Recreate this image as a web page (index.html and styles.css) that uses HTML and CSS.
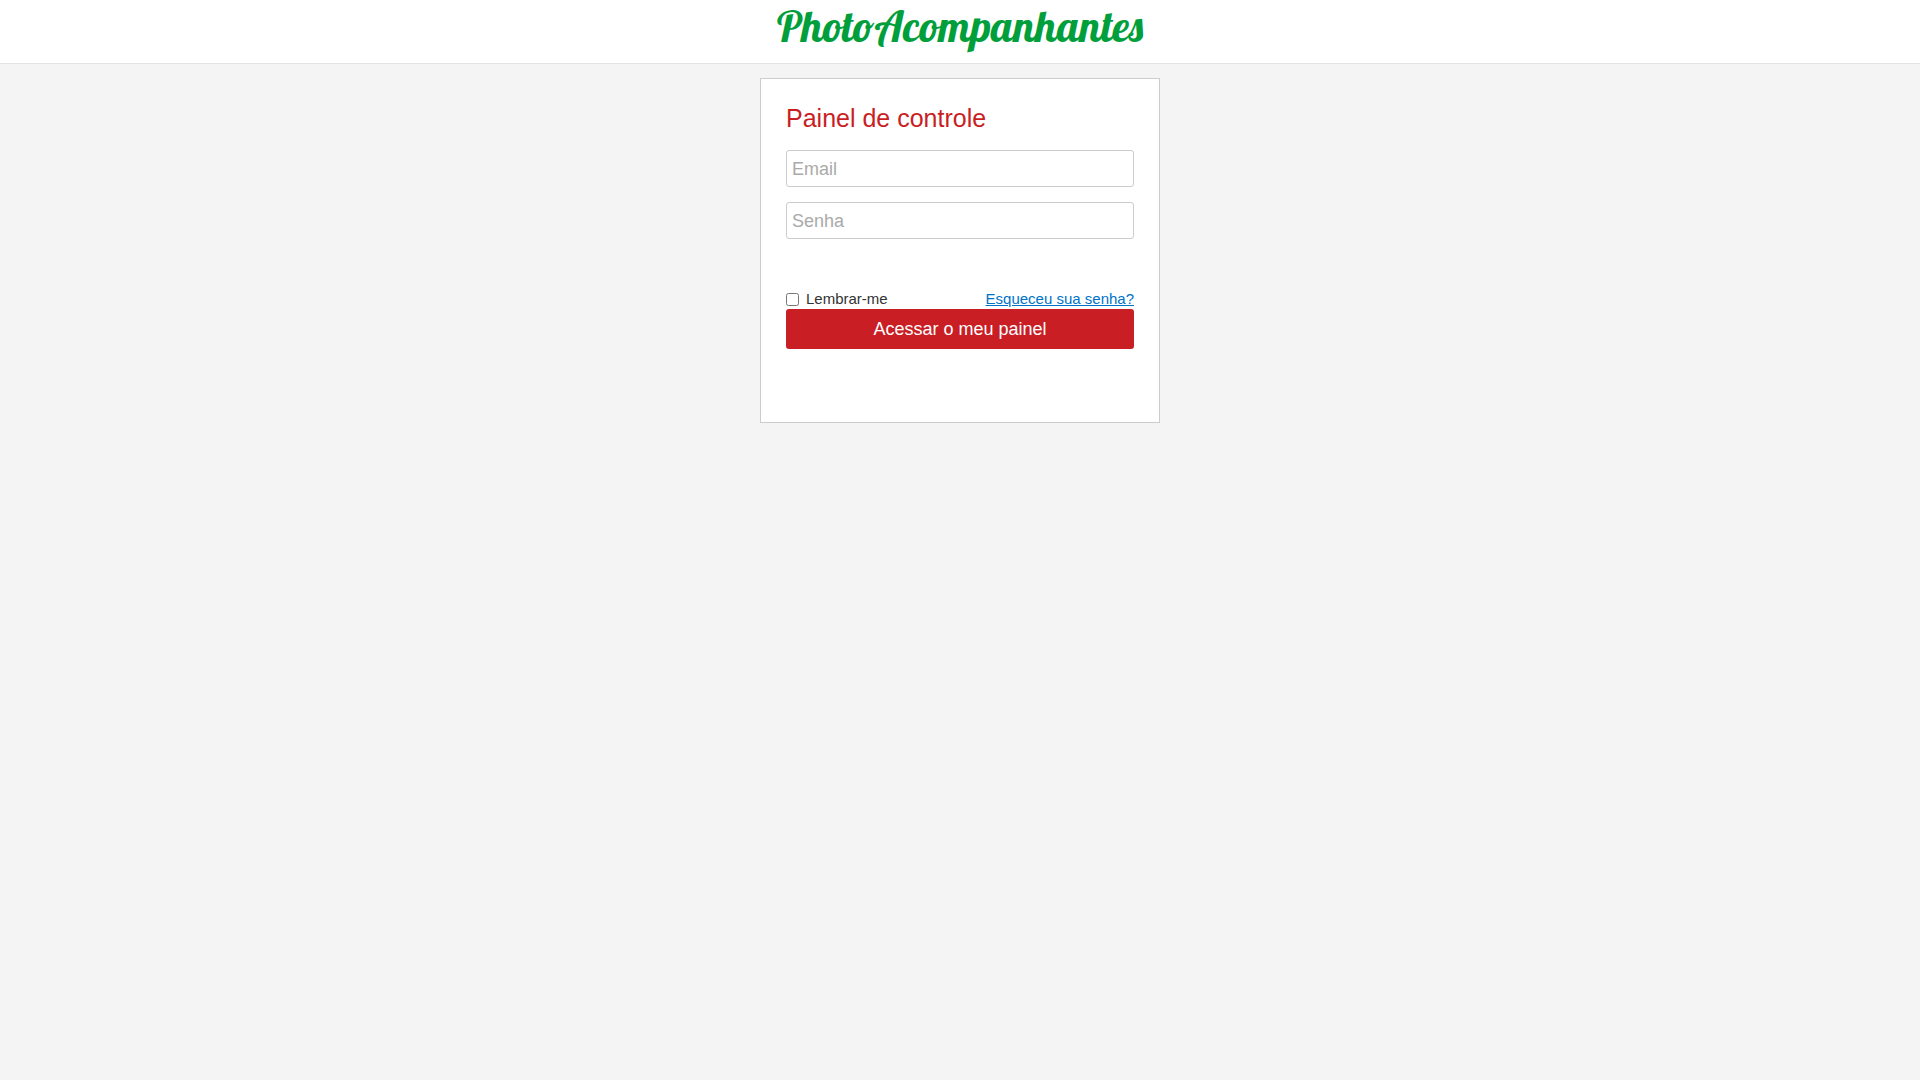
FILE: index.html
```html
<!DOCTYPE html>
<html lang="pt-BR">

<head>
  <meta charset="UTF-8">
  <meta name="viewport" content="width=device-width, initial-scale=1.0">
  <title>Painel de controle</title>
  <link rel="stylesheet" href="styles.css">
</head>

<body>
  <header class="header">
    <a class="logo" href="#">PhotoAcompanhantes</a>
  </header>
  <main class="login">
    <h1 class="title">Painel de controle</h1>
    <form class="form">
      <input class="field" type="email" name="email" placeholder="Email" aria-label="Email">
      <input class="field" type="password" name="password" placeholder="Senha" aria-label="Senha">
      <div class="options">
        <label class="remember" for="remember">
          <input class="check" type="checkbox" id="remember" name="remember">
          Lembrar-me
        </label>
        <a class="forgot" href="#">Esqueceu sua senha?</a>
      </div>
      <button class="button" type="submit">Acessar o meu painel</button>
    </form>
  </main>
</body>

</html>
```
FILE: styles.css
```css
* {
  margin: 0;
  padding: 0;
  box-sizing: border-box;
}

body {
  background: #f4f4f4;
  color: #333;
  font-family: Arial, "Liberation Sans", sans-serif;
  font-size: 15px;
  line-height: 18px;
}

.header {
  display: flex;
  justify-content: center;
  padding: 2px 0 13px;
  background: #fff;
  border-bottom: 1px solid #e3e3e3;
}

.logo {
  color: #009f3c;
  font-family: Lobster, "Liberation Serif", serif;
  font-size: 43px;
  font-weight: normal;
  line-height: 48px;
  text-decoration: none;
}

.login {
  max-width: 400px;
  margin: 14px auto;
  padding: 25px 25px 73px;
  background: #fff;
  border: 1px solid #ccc;
}

.title {
  margin-bottom: 18px;
  color: #c91e24;
  font-size: 25px;
  font-weight: normal;
  line-height: 28px;
}

.field {
  display: block;
  width: 100%;
  height: 37px;
  margin-bottom: 15px;
  padding: 2px 5px 0;
  background: #fff;
  border: 1px solid #ccc;
  border-radius: 3px;
  color: #333;
  font-family: inherit;
  font-size: 18px;
}

.field::placeholder {
  color: #aaa;
}

.options {
  display: flex;
  justify-content: space-between;
  padding: 36px 0 1px;
}

.remember {
  display: flex;
  align-items: center;
  gap: 7px;
}

.check {
  width: 13px;
  height: 13px;
}

.forgot {
  color: #0073c6;
}

.button {
  display: block;
  width: 100%;
  height: 40px;
  background: #c91e24;
  border: 0;
  border-radius: 3px;
  color: #fff;
  font-family: inherit;
  font-size: 18px;
  cursor: pointer;
}
```
